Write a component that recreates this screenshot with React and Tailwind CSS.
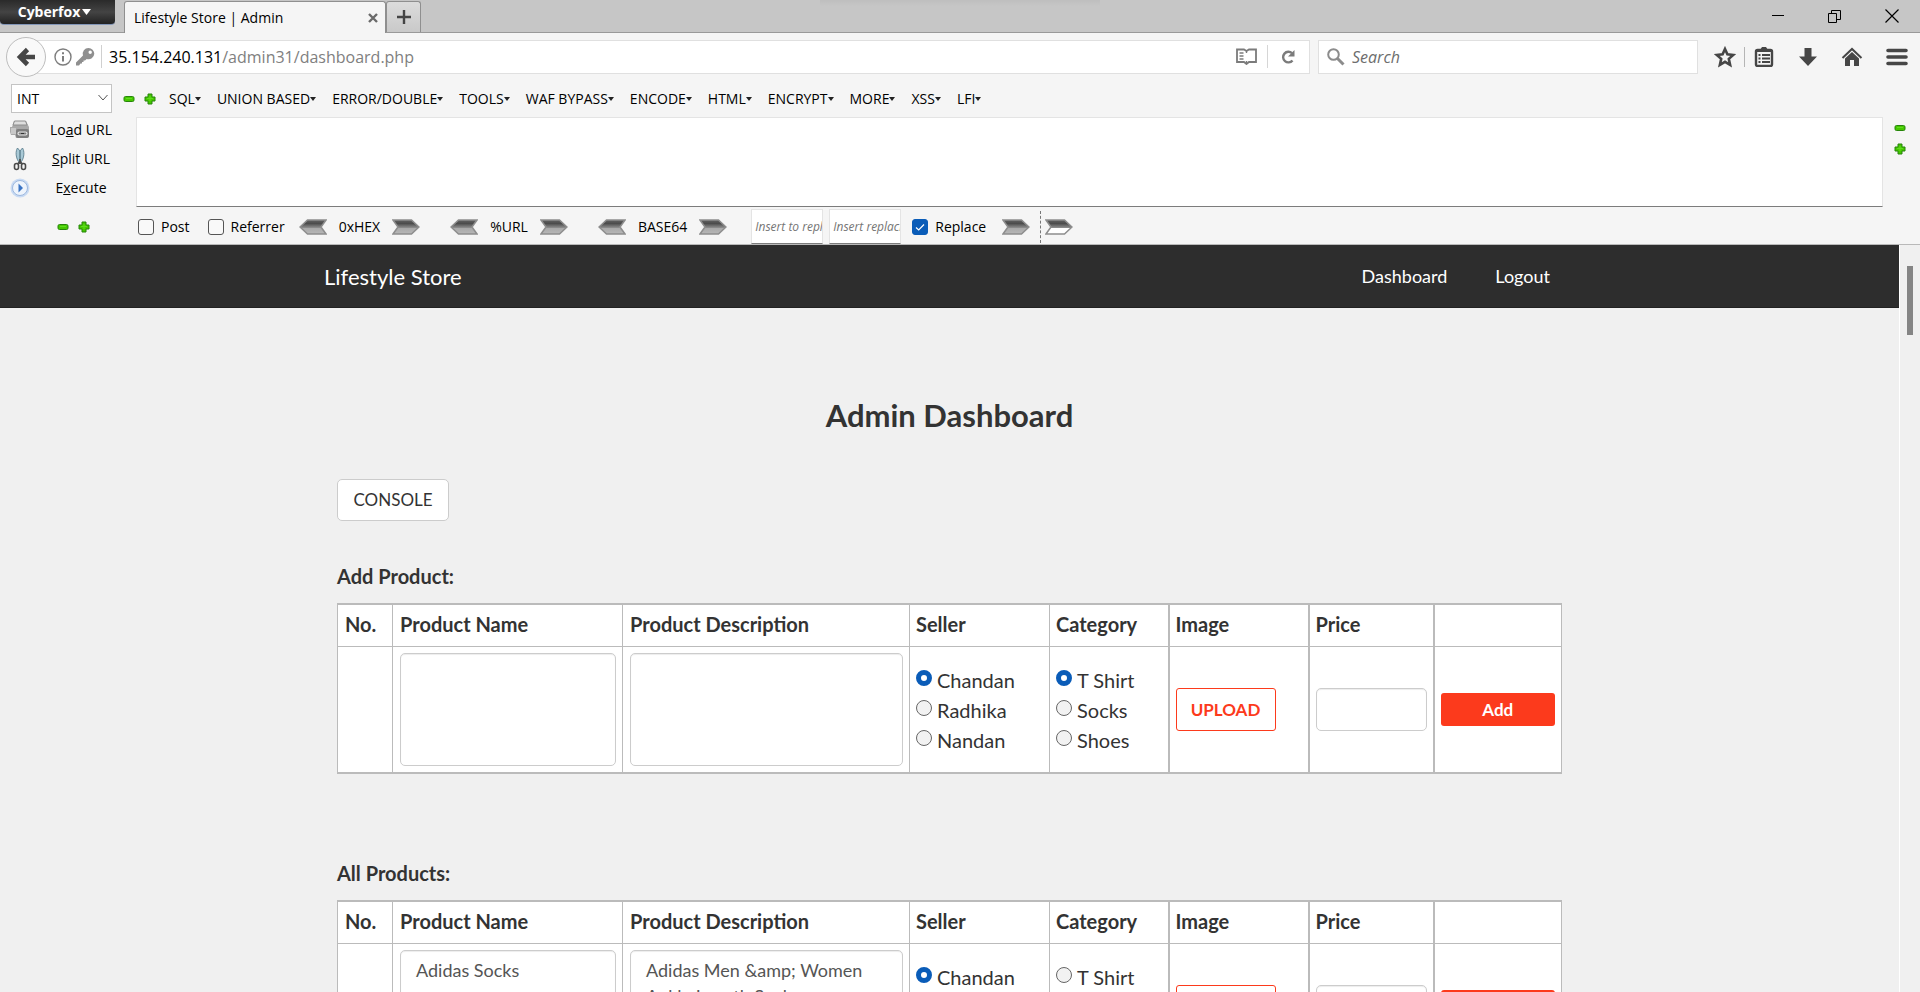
import React from "react";

const UI = "font-['Open_Sans','Noto_Sans',sans-serif]";

function Minus({ className = "" }) {
  return (
    <svg className={className} width="12" height="12" viewBox="0 0 12 12" aria-hidden="true">
      <rect x="1" y="3.5" width="10" height="5" rx="1.5" fill="#45c800" stroke="#26840a" />
      <path d="M3 5.5h6" stroke="#5fdc1e" />
    </svg>
  );
}

function Plus({ className = "" }) {
  return (
    <svg className={className} width="12" height="12" viewBox="0 0 12 12" aria-hidden="true">
      <path d="M4 1h4v3h3v4h-3v3h-4v-3h-3v-4h3z" fill="#45c800" stroke="#26840a" strokeLinejoin="round" />
      <path d="M3 5.5h6M6 3v5" stroke="#5fdc1e" />
    </svg>
  );
}

function SignButton({ kind, target }) {
  const label = (kind === "plus" ? "Increase " : "Decrease ") + target;
  return (
    <button type="button" aria-label={label} className="flex h-4 w-[21px] items-center justify-center">
      {kind === "plus" ? <Plus /> : <Minus />}
    </button>
  );
}

function ArrowButton({ label, left = false, hollow = false, className = "" }) {
  const id = "arrow-" + label.replace(/\W/g, "");
  const d = left ? "M8.5 1H27l-5 7 5 7H8.5L1 8z" : "M1 1h18.5L27 8l-7.5 7H1l5-7z";
  return (
    <button type="button" aria-label={label} className={"shrink-0 " + className}>
      <svg width="28" height="16" viewBox="0 0 28 16">
        <defs>
          <linearGradient id={id} x1="0" y1="0" x2="0" y2="1">
            <stop offset="0" stopColor="#626262" />
            <stop offset="0.25" stopColor="#4c4c4c" />
            <stop offset="0.55" stopColor="#8c8c8c" />
            <stop offset="0.58" stopColor={hollow ? "#ffffff" : "#a8a8a8"} />
            <stop offset="1" stopColor={hollow ? "#ffffff" : "#b8b8b8"} />
          </linearGradient>
        </defs>
        <path d={d} fill={"url(#" + id + ")"} stroke="#8d8d8d" strokeWidth="1.5" />
      </svg>
    </button>
  );
}

function TitleBar() {
  return (
    <div className="relative flex h-[33px] shrink-0 items-start border-b border-[#999] bg-[#c6c6c6]">
      <div className="absolute top-0 left-1/2 h-1.5 w-[280px] -translate-x-1/2 bg-linear-to-b from-black/4 to-transparent" aria-hidden="true" />
      <button
        type="button"
        className="flex h-[25px] w-[115px] items-center justify-center gap-0.5 rounded-b-[4px] border-b border-[#8296b8] bg-linear-to-b from-[#2a2a2a] via-[#444] to-[#222] pr-1.5 text-[14px] leading-5 font-bold text-white"
      >
        Cyberfox
        <svg width="9" height="6" viewBox="0 0 9 6" aria-hidden="true"><path d="M0 0h9L4.5 6z" fill="#fff" /></svg>
      </button>
      <div className="mt-px ml-[9px] flex h-8 w-[262px] items-center rounded-t-[3px] border border-b-0 border-[#8f8f8f] bg-[#f5f5f5] pr-[7px] pl-[9px] text-[14px] leading-5 text-black">
        <span className="flex-1">Lifestyle Store | Admin</span>
        <button type="button" aria-label="Close tab">
          <svg width="10" height="10" viewBox="0 0 10 10"><path d="M1 1l8 8M9 1l-8 8" stroke="#6a6a6a" strokeWidth="2.4" /></svg>
        </button>
      </div>
      <button type="button" aria-label="New tab" className="mt-px flex h-[31px] w-[35px] items-center justify-center rounded-t-[3px] border border-b-0 border-[#8f8f8f] bg-linear-to-b from-[#dcdcdc] to-[#c9c9c9]">
        <svg width="16" height="16" viewBox="0 0 16 16"><path d="M8 1v14M1 8h14" stroke="#444" strokeWidth="2.4" /></svg>
      </button>
      <div className="ml-auto flex h-8 text-black">
        <button type="button" aria-label="Minimise" className="flex w-[57px] items-center justify-center">
          <svg width="12" height="12" viewBox="0 0 12 12"><path d="M0 5.5h12" stroke="currentColor" /></svg>
        </button>
        <button type="button" aria-label="Restore" className="flex w-[57px] items-center justify-center">
          <svg width="13" height="13" viewBox="0 0 13 13" fill="none" stroke="currentColor"><path d="M.5 3.5h8v9h-8zM3.5 3.500v-3h9v9h-4" /></svg>
        </button>
        <button type="button" aria-label="Close" className="flex w-[57px] items-center justify-center">
          <svg width="14" height="14" viewBox="0 0 14 14"><path d="M.5 .5l13 13M13.5 .5l-13 13" stroke="currentColor" strokeWidth="1.2" /></svg>
        </button>
      </div>
    </div>
  );
}

function NavBar() {
  return (
    <div className="flex h-[47px] shrink-0 items-center pr-3 pl-1.5">
      <button type="button" aria-label="Back" className="z-10 flex size-10 shrink-0 items-center justify-center rounded-full border border-[#bdbdbd] bg-[#f9f9f9]">
        <svg width="20" height="20" viewBox="0 0 20 20"><path d="M11.5 2.500L4 10l7.5 7.500M4 10h15" fill="none" stroke="#464646" strokeWidth="4.6" strokeLinejoin="miter" /></svg>
      </button>
      <div className="-ml-5 flex h-[34px] flex-1 items-center border border-[#e0e0e0] bg-white pl-[27px] text-[16px] leading-6">
        <svg width="18" height="18" viewBox="0 0 18 18" aria-hidden="true">
          <circle cx="9" cy="9" r="8" fill="none" stroke="#7d7d7d" strokeWidth="1.4" />
          <path d="M9 8v5.5M9 4.3v2" stroke="#7d7d7d" strokeWidth="2" />
        </svg>
        <svg className="ml-1" width="19" height="18" viewBox="0 0 19 18" aria-hidden="true">
          <path fillRule="evenodd" d="M12.5 0a5.8 5.8 0 0 1 5.8 5.8 5.8 5.8 0 0 1-7.6 5.2L9 12.5H7.500V14H6v1.500H4.5L3 17.500H0v-3l7-7A5.8 5.8 0 0 1 12.500 0zM14.2 2.500a1.7 1.7 0 1 0 0 3.400 1.7 1.7 0 0 0 0-3.400z" fill="#8f8f8f" />
        </svg>
        <span className="mr-[7px] ml-1.5 h-[23px] w-px bg-[#d0d0d0]" />
        <div className="flex-1 text-[#808080]"><span className="text-black">35.154.240.131</span>/admin31/dashboard.php</div>
        <button type="button" aria-label="Reader view">
          <svg width="21" height="17" viewBox="0 0 21 17" fill="none" stroke="#7b7b7b"><path d="M1 1.500h7l2.500 1.500L13 1.500h7V14h-7l-2.500 2L8 14H1z" strokeWidth="1.8" /><path d="M10.500 3v2M10.500 13v2M3.500 5h4M3.500 8h4M3.500 11h4" strokeWidth="1.4" /></svg>
        </button>
        <span className="ml-2.5 h-[23px] w-px bg-[#d6d6d6]" />
        <button type="button" aria-label="Reload" className="mr-[13px] ml-3">
          <svg width="16" height="16" viewBox="0 0 16 16"><path d="M12.500 11.500A5.300 5.300 0 1 1 12 4.200" fill="none" stroke="#7b7b7b" strokeWidth="2.4" /><path d="M14.500 1v6.500H8z" fill="#7b7b7b" /></svg>
        </button>
      </div>
      <div className="ml-2 flex h-[34px] w-[380px] items-center gap-[7px] border border-[#e0e0e0] bg-white px-2">
        <svg width="18" height="18" viewBox="0 0 18 18" aria-hidden="true"><circle cx="6.500" cy="6.500" r="5.300" fill="none" stroke="#8c8c8c" strokeWidth="2" /><path d="M10.500 10.500l6 6" stroke="#8c8c8c" strokeWidth="3" /></svg>
        <input aria-label="Search" placeholder="Search" className="min-w-0 flex-1 bg-transparent text-[16px] leading-6 italic outline-none placeholder:text-[#6d6d6d]" />
      </div>
      <div className="flex items-center pl-4">
        <button type="button" aria-label="Bookmark this page">
          <svg width="22" height="22" viewBox="0 0 22 22"><path d="M11 3l2.400 5.400 5.800 .6-4.400 3.900 1.300 5.900-5.100-3-5.100 3 1.300-5.900L2.800 9l5.800-.6z" fill="none" stroke="#464646" strokeWidth="2.6" /></svg>
        </button>
        <span className="ml-2 h-5 w-px bg-[#b5b5b5]" />
        <button type="button" aria-label="Bookmarks list" className="ml-[9px]">
          <svg width="20" height="20" viewBox="0 0 20 20"><path d="M8 0h4l2 3H6z" fill="#464646" /><rect x="2" y="3" width="16" height="16" rx="1.500" fill="none" stroke="#464646" strokeWidth="2.400" /><path d="M2 4h16M4.500 8h2M8 8h8M4.500 11.500h2M8 11.500h8M4.500 15h2M8 15h8" stroke="#464646" strokeWidth="2" /></svg>
        </button>
        <button type="button" aria-label="Downloads" className="ml-6">
          <svg width="20" height="20" viewBox="0 0 20 20"><path d="M6.500 1h7v8.500H19L10 19 1 9.500h5.500z" fill="#464646" /></svg>
        </button>
        <button type="button" aria-label="Home" className="ml-[23px]">
          <svg width="22" height="20" viewBox="0 0 22 20"><path d="M1.500 11L11 2l9.500 9" fill="none" stroke="#464646" strokeWidth="2" /><path d="M4 11.500L11 5l7 6.500V19h-5v-6H9v6H4z" fill="#464646" /></svg>
        </button>
        <button type="button" aria-label="Menu" className="ml-[23px]">
          <svg width="22" height="18" viewBox="0 0 22 18"><path d="M2 2.500h18M2 9h18M2 15.500h18" stroke="#464646" strokeWidth="3.600" strokeLinecap="round" /></svg>
        </button>
      </div>
    </div>
  );
}

const MENUS = ["SQL", "UNION BASED", "ERROR/DOUBLE", "TOOLS", "WAF BYPASS", "ENCODE", "HTML", "ENCRYPT", "MORE", "XSS", "LFI"];

function LoadIcon() {
  return (
    <svg width="20" height="19" viewBox="0 0 20 19" aria-hidden="true">
      <path d="M4 1h12l3 6v9l-2 2H6l-1-3H1l-1-3V7h2z" fill="#a9a9a9" />
      <path d="M4.500 1h11l1.500 4H3z" fill="#dedede" stroke="#8e8e8e" />
      <path d="M1 8h5v6H1z" fill="#c8c8c8" />
      <rect x="6" y="9" width="13" height="9" rx="2" fill="#7e7e7e" />
      <rect x="8" y="12" width="9" height="3" rx="1.500" fill="none" stroke="#e5e5e5" strokeWidth="1.200" />
      <path d="M11 13.500h3" stroke="#333" />
    </svg>
  );
}

function SplitIcon() {
  return (
    <svg width="14" height="24" viewBox="0 0 14 24" aria-hidden="true">
      <path d="M4.500 1C2.500 4 2.500 10 5.500 14.500L7 13V4zM9.500 1c2 3 2 9-1 13.500L7 13V4z" fill="#a9c9d6" stroke="#5b7f8e" strokeWidth=".9" />
      <path d="M7 12v5" stroke="#555" strokeWidth="2" />
      <rect x="1.500" y="16.500" width="4" height="6" rx="2" fill="none" stroke="#4a4a4a" strokeWidth="1.600" />
      <rect x="8.500" y="16.500" width="4" height="6" rx="2" fill="none" stroke="#4a4a4a" strokeWidth="1.600" />
      <path d="M4.500 17L7 14.500 9.500 17" fill="none" stroke="#4a4a4a" strokeWidth="1.600" />
    </svg>
  );
}

function ExecuteIcon() {
  return (
    <svg width="20" height="20" viewBox="0 0 20 20" aria-hidden="true">
      <circle cx="10" cy="10" r="9.500" fill="#c8daf3" />
      <circle cx="10" cy="10" r="7.500" fill="#eef4fc" stroke="#9db8de" />
      <path d="M8.500 5.500v9l4.500-4.500z" fill="#3a74c4" />
    </svg>
  );
}

function SideAction({ icon, children }) {
  return (
    <button type="button" className="flex h-[29px] w-full items-center">
      <span className="flex w-5 justify-center">{icon}</span>
      <span className="flex-1 text-center">{children}</span>
    </button>
  );
}

function CheckBox({ id, label, defaultChecked = false }) {
  return (
    <span className="flex items-center gap-[7px]">
      <span className="relative flex size-4">
        <input id={id} type="checkbox" defaultChecked={defaultChecked} className="peer size-4 appearance-none rounded-[3px] border border-[#555] bg-[#f9f9f9] checked:border-[#0a5cb8] checked:bg-[#0a5cb8]" />
        <svg className="pointer-events-none absolute inset-0 hidden peer-checked:block" width="16" height="16" viewBox="0 0 16 16" aria-hidden="true"><path d="M4 8.500l2.700 2.500L12 5.500" fill="none" stroke="#fff" strokeWidth="1.200" /></svg>
      </span>
      <label htmlFor={id}>{label}</label>
    </span>
  );
}

function Converter({ name }) {
  return (
    <span className="flex items-center gap-3">
      <ArrowButton left label={"Decode " + name} />
      <span>{name}</span>
      <ArrowButton label={"Encode " + name} />
    </span>
  );
}

const REPLACE_FIELD = "h-[35px] w-[72px] border border-[#e4e4e4] border-b-[#7c7c7c] bg-white pl-[3px] text-[12px] italic outline-none placeholder:text-[#757575]";

function HackBar() {
  return (
    <div className="shrink-0 border-b border-[#b9b9b9] text-[14px] leading-5 text-black">
      <div className="flex h-[37px] items-center pl-[11px]">
        <div className="relative">
          <select aria-label="Value type" className="h-[29px] w-[101px] appearance-none border border-[#c4c4c4] bg-white pl-[5px]">
            <option>INT</option>
            <option>STRING</option>
          </select>
          <svg className="pointer-events-none absolute top-2.5 right-1" width="10" height="8" viewBox="0 0 10 8" aria-hidden="true"><path d="M.5 1L5 6l4.500-5" fill="none" stroke="#555" /></svg>
        </div>
        <div className="ml-1.5 flex">
          <SignButton kind="minus" target="value" />
          <SignButton kind="plus" target="value" />
        </div>
        <div className="ml-[9px] flex gap-4">
          {MENUS.map((m) => (
            <button key={m} type="button" className="flex items-center whitespace-nowrap">
              {m}
              <svg width="6" height="4" viewBox="0 0 6 4" aria-hidden="true"><path d="M0 0h6L3 4z" fill="#222" /></svg>
            </button>
          ))}
        </div>
      </div>
      <div className="flex">
        <div className="-mt-0.5 w-[136px] pr-1 pl-[10px]">
          <SideAction icon={<LoadIcon />}>Lo<u>a</u>d URL</SideAction>
          <SideAction icon={<SplitIcon />}><u>S</u>plit URL</SideAction>
          <SideAction icon={<ExecuteIcon />}>E<u>x</u>ecute</SideAction>
        </div>
        <textarea aria-label="URL" className="h-[90px] flex-1 resize-none border border-[#e4e4e4] border-b-[#7c7c7c] bg-white outline-none" />
        <div className="flex w-[37px] flex-col items-center gap-[5px] pt-[3px] pr-1">
          <SignButton kind="minus" target="rows" />
          <SignButton kind="plus" target="rows" />
        </div>
      </div>
      <div className="flex h-[37px] items-center pt-[3px]">
        <div className="flex w-[138px] pl-[52px]">
          <SignButton kind="minus" target="font size" />
          <SignButton kind="plus" target="font size" />
        </div>
        <div className="flex items-center gap-[18px]">
          <CheckBox id="post" label="Post" />
          <CheckBox id="referrer" label="Referrer" />
        </div>
        <div className="ml-3.5 flex items-center gap-[30px]">
          <Converter name="0xHEX" />
          <Converter name="%URL" />
          <Converter name="BASE64" />
        </div>
        <div className="ml-6 flex gap-1.5 self-end">
          <input aria-label="Insert to replace" placeholder="Insert to replace" className={REPLACE_FIELD} />
          <input aria-label="Insert replacing" placeholder="Insert replacing" className={REPLACE_FIELD} />
        </div>
        <div className="ml-[11px] flex items-center">
          <CheckBox id="replace" label="Replace" defaultChecked />
          <ArrowButton label="Replace all" className="ml-4" />
          <span className="ml-2.5 h-8 border-l border-dashed border-[#777]" />
          <ArrowButton label="Replace selection" hollow className="ml-1" />
        </div>
      </div>
    </div>
  );
}

function Radios({ name, options, selected }) {
  return (
    <div className="leading-[30px]">
      {options.map((o, i) => (
        <div key={o} className="flex items-center gap-[5px]">
          <input
            id={name + "-" + i}
            type="radio"
            name={name}
            defaultChecked={i === selected}
            className="mb-1 size-4 shrink-0 appearance-none rounded-full border border-[#666] bg-[#f2f2f2] checked:border-5 checked:border-[#0a5cb8] checked:bg-white"
          />
          <label htmlFor={name + "-" + i} className="whitespace-nowrap">{o}</label>
        </div>
      ))}
    </div>
  );
}

const FIELD = "block w-full resize-none rounded-[5px] border border-[#ccc] bg-white px-[15px] py-1.5 text-[18px] leading-[26px] text-[#555] shadow-[inset_0_1px_1px_rgba(0,0,0,0.075)] outline-none";
const HEADERS = ["No.", "Product Name", "Product Description", "Seller", "Category", "Image", "Price", ""];
const CELL = "border border-[#bbb] pr-1.5 pl-[7px]";
const RADIO_CELL = "border border-[#bbb] px-1.5";
const WIDE_CELL = "border border-l-2 border-[#bbb] px-1.5";

function ProductTable({ id, product, action }) {
  return (
    <table className="w-full table-fixed border-collapse border-y-2 border-[#bbb] bg-white text-left text-[20px]">
      <colgroup>
        <col className="w-[55px]" />
        <col className="w-[230px]" />
        <col className="w-[287px]" />
        <col className="w-[140px]" />
        <col className="w-[119px]" />
        <col className="w-[140px]" />
        <col className="w-[125px]" />
        <col />
      </colgroup>
      <thead>
        <tr className="leading-7">
          {HEADERS.map((h, i) => (
            <th key={i} scope="col" className={"pt-[5px] pb-2 font-bold " + (i > 4 ? WIDE_CELL : i > 2 ? RADIO_CELL : CELL)}>{h}</th>
          ))}
        </tr>
      </thead>
      <tbody>
        <tr>
          <td className={CELL} />
          <td className={CELL + " py-1.5"}><textarea aria-label="Product name" defaultValue={product.name} className={FIELD + " h-[113px]"} /></td>
          <td className={CELL + " py-1.5"}><textarea aria-label="Product description" defaultValue={product.description} className={FIELD + " h-[113px]"} /></td>
          <td className={RADIO_CELL}><Radios name={id + "-seller"} options={["Chandan", "Radhika", "Nandan"]} selected={0} /></td>
          <td className={RADIO_CELL}><Radios name={id + "-category"} options={["T Shirt", "Socks", "Shoes"]} selected={product.category} /></td>
          <td className={WIDE_CELL}>
            <button type="button" className="block h-[43px] w-[100px] rounded-[3px] border border-[#fc3a1c] bg-white text-[17px] font-bold text-[#fc3a1c]">UPLOAD</button>
          </td>
          <td className={WIDE_CELL}><input aria-label="Price" defaultValue={product.price} className={FIELD + " h-[43px]"} /></td>
          <td className={WIDE_CELL}>
            <button type="button" className="block h-[33px] w-full rounded-[3px] bg-[#fc3a1c] text-[17px] font-bold text-white">{action}</button>
          </td>
        </tr>
      </tbody>
    </table>
  );
}

export default function App() {
  return (
    <div className={"flex h-screen flex-col overflow-hidden bg-[#f5f5f5] " + UI}>
      <TitleBar />
      <NavBar />
      <HackBar />
      <div className="flex min-h-0 flex-1 bg-[#f0f0f0] font-['Lato','Open_Sans',sans-serif] text-[#333]">
        <div className="min-w-0 flex-1 overflow-y-auto [scrollbar-width:none]">
          <header className="border-b border-[#222] bg-[#2d2d2d] px-4">
            <div className="mx-auto flex h-[62px] max-w-[1251px] items-center justify-between pr-[25px] text-white">
              <a href="#home" className="text-[22px]">Lifestyle Store</a>
              <nav className="flex gap-12 text-[18px]">
                <a href="#dashboard">Dashboard</a>
                <a href="#logout">Logout</a>
              </nav>
            </div>
          </header>
          <main className="mx-auto max-w-[1225px] pt-[89px]">
            <h1 className="text-center text-[31px] leading-9 font-bold">Admin Dashboard</h1>
            <button type="button" className="mt-[46px] block h-[42px] w-[112px] rounded-[5px] border border-[#ccc] bg-white text-[17px]">CONSOLE</button>
            <h2 className="mt-[43px] text-[20px] leading-6 font-bold">Add Product:</h2>
            <div className="mt-[15px]">
              <ProductTable id="new" product={{ name: "", description: "", category: 0, price: "" }} action="Add" />
            </div>
            <h2 className="mt-[87px] text-[20px] leading-6 font-bold">All Products:</h2>
            <div className="mt-[15px]">
              <ProductTable id="p1" product={{ name: "Adidas Socks", description: "Adidas Men &amp; Women Ankle Length Socks", category: 1, price: "" }} action="Update" />
            </div>
          </main>
        </div>
        <div className="w-[21px] border-l border-white pt-[21px] pl-[7px]" aria-hidden="true">
          <div className="h-[69px] w-1.5 bg-[#858585]" />
        </div>
      </div>
    </div>
  );
}
